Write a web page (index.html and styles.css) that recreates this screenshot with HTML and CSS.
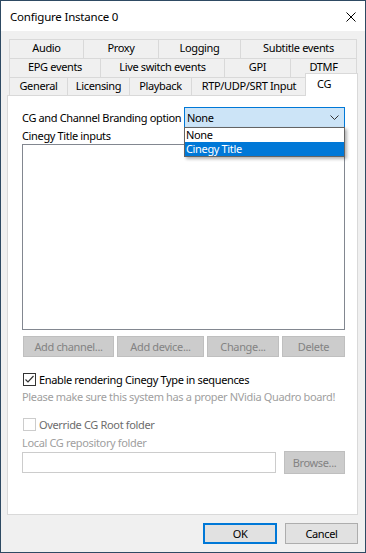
FILE: index.html
```html
<!DOCTYPE html>
<html lang="en">
<head>
  <meta charset="UTF-8" />
  <title>Configure Instance 0</title>
  <link rel="stylesheet" href="styles.css">
</head>
<body>
  <div class="window">
    <div class="titlebar">
      <span class="title">Configure Instance 0</span>
      <svg class="close" width="10" height="10" viewBox="0 0 10 10">
        <path d="M0.5 0.5 L9.5 9.5 M9.5 0.5 L0.5 9.5" stroke="#000" stroke-width="1" fill="none"/>
      </svg>
    </div>

    <div class="client">
      <!-- tab rows -->
      <div class="tabs">
        <div class="tab-row row1">
          <div class="tab">Audio</div>
          <div class="tab">Proxy</div>
          <div class="tab">Logging</div>
          <div class="tab">Subtitle events</div>
        </div>
        <div class="tab-row row2">
          <div class="tab">EPG events</div>
          <div class="tab">Live switch events</div>
          <div class="tab">GPI</div>
          <div class="tab">DTMF</div>
        </div>
        <div class="tab-row row3">
          <div class="tab">General</div>
          <div class="tab">Licensing</div>
          <div class="tab">Playback</div>
          <div class="tab">RTP/UDP/SRT Input</div>
          <div class="tab selected">CG</div>
        </div>
      </div>

      <div class="panel">
        <div class="option-row">
          <span>CG and Channel Branding option</span>
          <div class="combo">
            <span>None</span>
            <svg width="9" height="5" viewBox="0 0 9 5">
              <polyline points="0.5,0.5 4.5,4.5 8.5,0.5" stroke="#333" stroke-width="1" fill="none"/>
            </svg>
            <div class="combo-list">
              <div class="combo-item">None</div>
              <div class="combo-item active">Cinegy Title</div>
            </div>
          </div>
        </div>

        <div class="label">Cinegy Title inputs</div>
        <div class="listbox"></div>

        <div class="btn-row">
          <div class="btn disabled">Add channel...</div>
          <div class="btn disabled">Add device...</div>
          <div class="btn disabled">Change...</div>
          <div class="btn disabled">Delete</div>
        </div>

        <div class="check-row">
          <span class="check checked">
            <svg width="11" height="11" viewBox="0 0 11 11">
              <polyline points="1.5,5.5 4,8 9.5,2" stroke="#333" stroke-width="1.2" fill="none"/>
            </svg>
          </span>
          <span>Enable rendering Cinegy Type in sequences</span>
        </div>
        <div class="note">Please make sure this system has a proper NVidia Quadro board!</div>

        <div class="check-row off">
          <span class="check"></span>
          <span>Override CG Root folder</span>
        </div>
        <div class="label dim">Local CG repository folder</div>
        <div class="folder-row">
          <div class="textbox"></div>
          <div class="btn disabled browse">Browse...</div>
        </div>
      </div>

      <div class="footer">
        <div class="btn default">OK</div>
        <div class="btn">Cancel</div>
      </div>
    </div>
  </div>
</body>
</html>
```

FILE: styles.css
```css
body {
  margin: 0;
  font-family: "Noto Sans", sans-serif;
  font-size: 11px;
  letter-spacing: -0.35px;
  white-space: nowrap;
  color: #000;
  background: #2e4a63;
}

.window {
  width: 366px;
  height: 553px;
  box-sizing: border-box;
  border: 1px solid #2e4a63;
  background: #f0f0f0;
  display: flex;
  flex-direction: column;
}

.titlebar {
  height: 30px;
  background: #fff;
  display: flex;
  align-items: center;
  justify-content: space-between;
  padding: 0 9px 0 9px;
  flex-shrink: 0;
}

.title {
  font-size: 11.5px;
  letter-spacing: -0.2px;
  margin-top: 1px;
}

.close {
  margin-top: 1px;
}

.client {
  flex: 1;
  display: flex;
  flex-direction: column;
  padding-top: 8px;
}

/* tabs */
.tabs {
  margin-left: 8px;
  width: 348px;
}

.tab-row {
  display: grid;
  height: 19px;
}

.row1 { grid-template-columns: 74px 75px 82px 1fr; }
.row2 { grid-template-columns: 91px 124px 66px 1fr; }
.row3 { grid-template-columns: 58px 62px 62px 115px 1fr; height: 18px; }

.tab {
  border-top: 1px solid #d9d9d9;
  border-left: 1px solid #d9d9d9;
  background: #f0f0f0;
  text-align: center;
  line-height: 16px;
}

.tab:last-child {
  border-right: 1px solid #d9d9d9;
}

.tab.selected {
  position: relative;
  z-index: 2;
  background: #fff;
  margin: -4px -1px -1px -1px;
  text-align: left;
  padding-left: 11px;
  padding-top: 3px;
  line-height: 14px;
}

/* panel */
.panel {
  margin-left: 6px;
  width: 351px;
  height: 420px;
  box-sizing: border-box;
  background: #fff;
  border: 1px solid #d9d9d9;
  padding: 0 12px 0 14px;
  display: flex;
  flex-direction: column;
}

.option-row {
  margin-top: 11px;
  display: flex;
  align-items: center;
  justify-content: space-between;
  height: 21px;
}

.combo {
  position: relative;
  width: 161px;
  height: 21px;
  box-sizing: border-box;
  border: 1px solid #0078d7;
  background: #cce4f7;
  display: flex;
  align-items: center;
  justify-content: space-between;
  padding: 0 5px 0 2px;
}

.combo-list {
  position: absolute;
  left: -1px;
  top: 19px;
  width: 161px;
  box-sizing: border-box;
  border: 1px solid #646464;
  background: #fff;
  box-shadow: 2px 2px 3px rgba(0, 0, 0, 0.3);
  z-index: 3;
}

.combo-item {
  height: 14px;
  line-height: 14px;
  padding-left: 1px;
}

.combo-item.active {
  background: #0078d7;
  color: #fff;
}

.label {
  height: 16px;
  line-height: 16px;
}

.label.dim {
  color: #a0a0a0;
  margin-top: 3px;
}

.listbox {
  height: 186px;
  box-sizing: border-box;
  border: 1px solid #828790;
  background: #fff;
}

.btn-row {
  margin-top: 6px;
  margin-left: 1px;
  display: grid;
  grid-template-columns: 91px 87px 72px 63px;
  gap: 3px;
}

.btn {
  height: 21px;
  box-sizing: border-box;
  border: 1px solid #adadad;
  background: #e1e1e1;
  display: flex;
  align-items: center;
  justify-content: center;
}

.btn.disabled {
  background: #cccccc;
  border-color: #bfbfbf;
  color: #838383;
}

.btn.default {
  border: 2px solid #0078d7;
}

.check-row {
  margin-top: 14px;
  display: flex;
  align-items: center;
  height: 16px;
}

.check {
  width: 13px;
  height: 13px;
  box-sizing: border-box;
  border: 1px solid #333;
  background: #fff;
  margin-right: 3px;
  margin-left: 1px;
  display: flex;
  align-items: center;
  justify-content: center;
}

.check-row.off {
  margin-top: 11px;
  color: #6d6d6d;
}

.check-row.off .check {
  border-color: #cccccc;
}

.note {
  margin-top: 2px;
  height: 16px;
  line-height: 16px;
  color: #a0a0a0;
}

.folder-row {
  display: flex;
  align-items: center;
  justify-content: space-between;
  height: 23px;
}

.textbox {
  width: 254px;
  height: 21px;
  box-sizing: border-box;
  border: 1px solid #cccccc;
  background: #fff;
}

.browse {
  width: 61px;
  height: 23px;
}

/* bottom buttons */
.footer {
  margin-top: 8px;
  padding-right: 7px;
  display: flex;
  justify-content: flex-end;
  gap: 8px;
}

.footer .btn {
  width: 73px;
}

.footer .btn.default {
  width: 74px;
}
```
